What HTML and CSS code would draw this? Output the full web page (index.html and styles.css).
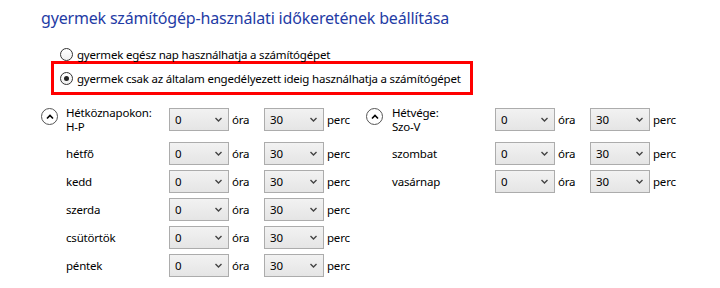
FILE: index.html
```html
<!DOCTYPE html>
<html lang="hu">
<head>
    <meta charset="UTF-8">
    <title>Időkeret beállítása</title>
    <link rel="stylesheet" href="styles.css">
</head>
<body>
    <h1 class="title">gyermek számítógép-használati időkeretének beállítása</h1>

    <div class="options">
        <div class="radio-row">
            <span class="radio"></span>
            <span>gyermek egész nap használhatja a számítógépet</span>
        </div>
        <div class="radio-row highlight">
            <span class="radio checked"></span>
            <span>gyermek csak az általam engedélyezett ideig használhatja a számítógépet</span>
        </div>
    </div>

    <div class="schedule">
        <div class="group weekdays">
            <span class="expander"><svg width="8" height="6" viewBox="0 0 8 6"><path d="M1 4.5 L4 1.5 L7 4.5" fill="none" stroke="#000" stroke-width="1.6"/></svg></span>
            <span class="label head">Hétköznapokon:<br>H-P</span>
            <div class="dropdown">0<svg class="chev" width="7" height="5" viewBox="0 0 7 5"><path d="M0.5 1 L3.5 4 L6.5 1" fill="none" stroke="#444" stroke-width="1.4"/></svg></div>
            <span class="unit">óra</span>
            <div class="dropdown">30<svg class="chev" width="7" height="5" viewBox="0 0 7 5"><path d="M0.5 1 L3.5 4 L6.5 1" fill="none" stroke="#444" stroke-width="1.4"/></svg></div>
            <span class="unit">perc</span>

            <span></span>
            <span class="label">hétfő</span>
            <div class="dropdown">0<svg class="chev" width="7" height="5" viewBox="0 0 7 5"><path d="M0.5 1 L3.5 4 L6.5 1" fill="none" stroke="#444" stroke-width="1.4"/></svg></div>
            <span class="unit">óra</span>
            <div class="dropdown">30<svg class="chev" width="7" height="5" viewBox="0 0 7 5"><path d="M0.5 1 L3.5 4 L6.5 1" fill="none" stroke="#444" stroke-width="1.4"/></svg></div>
            <span class="unit">perc</span>

            <span></span>
            <span class="label">kedd</span>
            <div class="dropdown">0<svg class="chev" width="7" height="5" viewBox="0 0 7 5"><path d="M0.5 1 L3.5 4 L6.5 1" fill="none" stroke="#444" stroke-width="1.4"/></svg></div>
            <span class="unit">óra</span>
            <div class="dropdown">30<svg class="chev" width="7" height="5" viewBox="0 0 7 5"><path d="M0.5 1 L3.5 4 L6.5 1" fill="none" stroke="#444" stroke-width="1.4"/></svg></div>
            <span class="unit">perc</span>

            <span></span>
            <span class="label">szerda</span>
            <div class="dropdown">0<svg class="chev" width="7" height="5" viewBox="0 0 7 5"><path d="M0.5 1 L3.5 4 L6.5 1" fill="none" stroke="#444" stroke-width="1.4"/></svg></div>
            <span class="unit">óra</span>
            <div class="dropdown">30<svg class="chev" width="7" height="5" viewBox="0 0 7 5"><path d="M0.5 1 L3.5 4 L6.5 1" fill="none" stroke="#444" stroke-width="1.4"/></svg></div>
            <span class="unit">perc</span>

            <span></span>
            <span class="label">csütörtök</span>
            <div class="dropdown">0<svg class="chev" width="7" height="5" viewBox="0 0 7 5"><path d="M0.5 1 L3.5 4 L6.5 1" fill="none" stroke="#444" stroke-width="1.4"/></svg></div>
            <span class="unit">óra</span>
            <div class="dropdown">30<svg class="chev" width="7" height="5" viewBox="0 0 7 5"><path d="M0.5 1 L3.5 4 L6.5 1" fill="none" stroke="#444" stroke-width="1.4"/></svg></div>
            <span class="unit">perc</span>

            <span></span>
            <span class="label">péntek</span>
            <div class="dropdown">0<svg class="chev" width="7" height="5" viewBox="0 0 7 5"><path d="M0.5 1 L3.5 4 L6.5 1" fill="none" stroke="#444" stroke-width="1.4"/></svg></div>
            <span class="unit">óra</span>
            <div class="dropdown">30<svg class="chev" width="7" height="5" viewBox="0 0 7 5"><path d="M0.5 1 L3.5 4 L6.5 1" fill="none" stroke="#444" stroke-width="1.4"/></svg></div>
            <span class="unit">perc</span>
        </div>

        <div class="group weekend">
            <span class="expander"><svg width="8" height="6" viewBox="0 0 8 6"><path d="M1 4.5 L4 1.5 L7 4.5" fill="none" stroke="#000" stroke-width="1.6"/></svg></span>
            <span class="label head">Hétvége:<br>Szo-V</span>
            <div class="dropdown">0<svg class="chev" width="7" height="5" viewBox="0 0 7 5"><path d="M0.5 1 L3.5 4 L6.5 1" fill="none" stroke="#444" stroke-width="1.4"/></svg></div>
            <span class="unit">óra</span>
            <div class="dropdown">30<svg class="chev" width="7" height="5" viewBox="0 0 7 5"><path d="M0.5 1 L3.5 4 L6.5 1" fill="none" stroke="#444" stroke-width="1.4"/></svg></div>
            <span class="unit">perc</span>

            <span></span>
            <span class="label">szombat</span>
            <div class="dropdown">0<svg class="chev" width="7" height="5" viewBox="0 0 7 5"><path d="M0.5 1 L3.5 4 L6.5 1" fill="none" stroke="#444" stroke-width="1.4"/></svg></div>
            <span class="unit">óra</span>
            <div class="dropdown">30<svg class="chev" width="7" height="5" viewBox="0 0 7 5"><path d="M0.5 1 L3.5 4 L6.5 1" fill="none" stroke="#444" stroke-width="1.4"/></svg></div>
            <span class="unit">perc</span>

            <span></span>
            <span class="label">vasárnap</span>
            <div class="dropdown">0<svg class="chev" width="7" height="5" viewBox="0 0 7 5"><path d="M0.5 1 L3.5 4 L6.5 1" fill="none" stroke="#444" stroke-width="1.4"/></svg></div>
            <span class="unit">óra</span>
            <div class="dropdown">30<svg class="chev" width="7" height="5" viewBox="0 0 7 5"><path d="M0.5 1 L3.5 4 L6.5 1" fill="none" stroke="#444" stroke-width="1.4"/></svg></div>
            <span class="unit">perc</span>
        </div>
    </div>
</body>
</html>
```

FILE: styles.css
```css
body {
    font-family: "Noto Sans", "Open Sans", sans-serif;
    font-size: 11.5px;
    letter-spacing: -0.2px;
    color: #000;
    background: #fff;
    margin: 0;
    padding: 0 0 0 41px;
}

.title {
    font-size: 16px;
    letter-spacing: -0.18px;
    font-weight: normal;
    color: #1f3ca5;
    margin: 0;
    padding-top: 7px;
    line-height: 22px;
}

.options {
    margin-top: 17px;
    padding-left: 10px;
}

.radio-row {
    display: flex;
    align-items: center;
    height: 16px;
    padding-left: 9px;
    gap: 4px;
    white-space: nowrap;
}

.highlight {
    width: 410px;
    height: 28px;
    border: 3px solid #f00;
    padding-left: 6px;
    margin-top: -1px;
}

.radio {
    width: 11px;
    height: 11px;
    border: 1px solid #333;
    border-radius: 50%;
    background: linear-gradient(#fff, #f0f0f0);
    display: flex;
    align-items: center;
    justify-content: center;
}

.radio.checked::after {
    content: "";
    width: 5px;
    height: 5px;
    border-radius: 50%;
    background: #222;
}

.schedule {
    display: flex;
    margin-top: 11px;
}

.group {
    display: grid;
    grid-template-columns: 25px 103px 60px 35px 60px auto;
    grid-template-rows: 31px;
    grid-auto-rows: 23px;
    row-gap: 5px;
    align-items: center;
}

.weekdays {
    width: 325px;
}

.weekend {
    grid-template-columns: 26px 103px 60px 35px 60px auto;
}

.group > .head {
    line-height: 14px;
    align-self: start;
}

.expander {
    width: 15px;
    height: 15px;
    border: 1px solid #555;
    border-radius: 50%;
    display: flex;
    align-items: center;
    justify-content: center;
    align-self: start;
    margin-top: 2px;
}

.dropdown {
    width: 60px;
    height: 23px;
    box-sizing: border-box;
    border: 1px solid #acacac;
    background: linear-gradient(#f2f2f2, #e5e5e5);
    display: flex;
    align-items: center;
    justify-content: space-between;
    padding-left: 5px;
    padding-right: 6px;
}

.group > .dropdown:nth-child(3),
.group > .dropdown:nth-child(5),
.group > .unit:nth-child(4),
.group > .unit:nth-child(6) {
    align-self: start;
    margin-top: 2px;
}

.group > .unit:nth-child(4),
.group > .unit:nth-child(6) {
    line-height: 23px;
}

.unit {
    padding-left: 3px;
}
```
